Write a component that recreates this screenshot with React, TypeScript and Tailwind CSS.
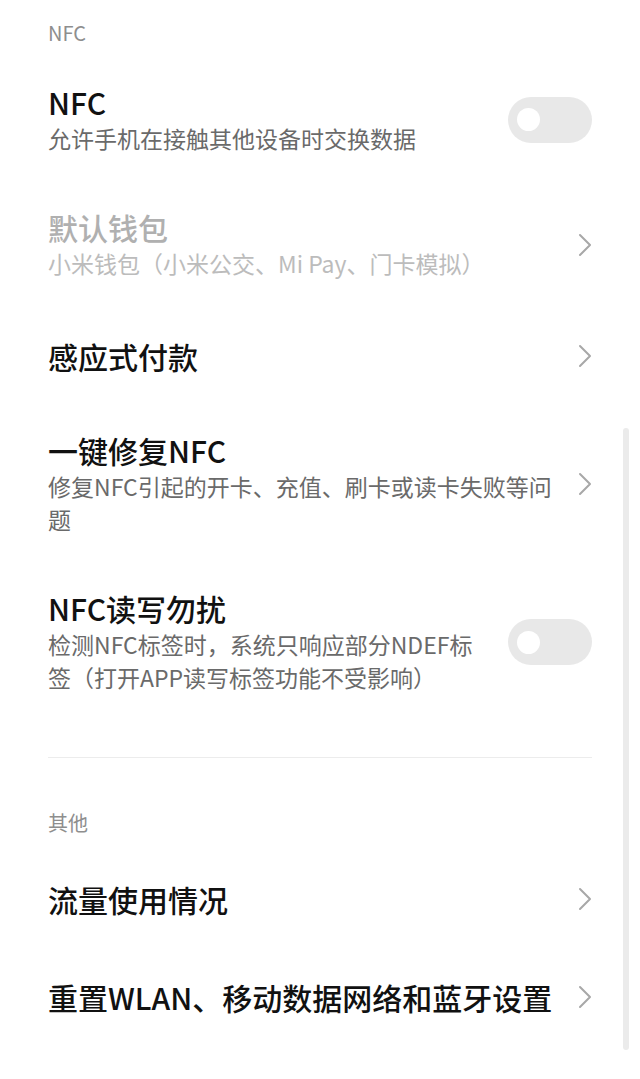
import React from 'react';

const font = { fontFamily: '"Noto Sans CJK SC", "Noto Sans", sans-serif' };

const Toggle: React.FC = () => (
  <div className="flex h-[46px] w-[84px] shrink-0 items-center rounded-full bg-[#e8e8e8] pl-[9px]">
    <div className="h-[23px] w-[23px] rounded-full bg-white" />
  </div>
);

const Chevron: React.FC = () => (
  <svg width="14" height="24" viewBox="0 0 14 24" className="shrink-0" fill="none">
    <path d="M2 2 L12 12 L2 22" stroke="#a8a8a8" strokeWidth="2" strokeLinecap="round" strokeLinejoin="round" />
  </svg>
);

type RowProps = {
  title: string;
  subtitle?: string;
  disabled?: boolean;
  right: 'toggle' | 'chevron';
};

const Row: React.FC<RowProps> = ({ title, subtitle, disabled, right }) => (
  <div
    className={`flex items-center px-[48px] ${subtitle ? 'py-[27px]' : 'py-[31px]'} ${
      right === 'toggle' ? 'gap-[20px]' : 'gap-[12px]'
    }`}
  >
    <div className="min-w-0 flex-1">
      <div
        className={`text-[30px] font-medium leading-[36px] ${
          disabled ? 'text-[#b0b0b0]' : 'text-[#111]'
        }`}
      >
        {title}
      </div>
      {subtitle && (
        <div
          className={`mt-[2px] text-[23px] leading-[33px] ${
            disabled ? 'text-[#bcbcbc]' : 'text-[#6a6a6a]'
          }`}
        >
          {subtitle}
        </div>
      )}
    </div>
    {right === 'toggle' ? <Toggle /> : <Chevron />}
  </div>
);

const SectionHeader: React.FC<{ label: string; className: string }> = ({ label, className }) => (
  <div className={`px-[48px] text-[20px] leading-[24px] text-[#8e8e8e] ${className}`}>{label}</div>
);

export default function App() {
  return (
    <div className="relative h-[1079px] w-full overflow-hidden bg-white" style={font}>
      <SectionHeader label="NFC" className="pt-[21px] pb-[12px]" />
      <Row title="NFC" subtitle="允许手机在接触其他设备时交换数据" right="toggle" />
      <Row title="默认钱包" subtitle="小米钱包（小米公交、Mi Pay、门卡模拟）" disabled right="chevron" />
      <Row title="感应式付款" right="chevron" />
      <Row title="一键修复NFC" subtitle="修复NFC引起的开卡、充值、刷卡或读卡失败等问题" right="chevron" />
      <Row title="NFC读写勿扰" subtitle="检测NFC标签时，系统只响应部分NDEF标签（打开APP读写标签功能不受影响）" right="toggle" />

      <div className="mx-[48px] mt-[36px] h-px bg-[#ececec]" />

      <SectionHeader label="其他" className="pt-[53px] pb-[15px]" />
      <Row title="流量使用情况" right="chevron" />
      <Row title="重置WLAN、移动数据网络和蓝牙设置" right="chevron" />

      {/* scrollbar */}
      <div className="absolute right-[11px] top-[428px] h-[622px] w-[6px] rounded-full bg-[#ebebeb]" />
    </div>
  );
}
